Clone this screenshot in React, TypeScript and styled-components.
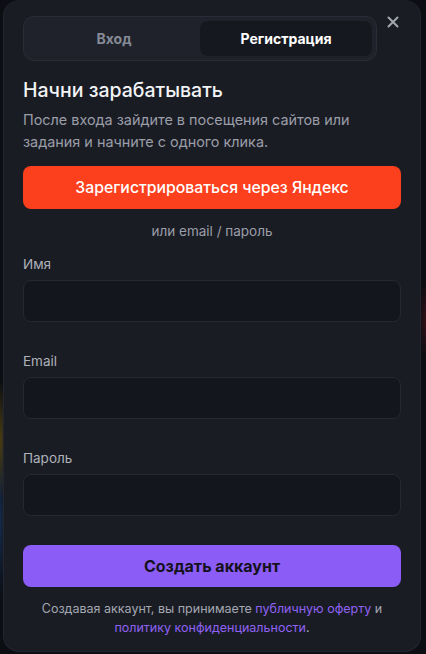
import React, { useState } from "react";
import styled, { createGlobalStyle } from "styled-components";

const Global = createGlobalStyle`
  html, body { margin: 0; padding: 0; }
  body {
    background:
      radial-gradient(ellipse 10px 60px at 0px 440px, rgba(150,120,20,0.45), transparent),
      radial-gradient(ellipse 10px 80px at 0px 520px, rgba(30,70,130,0.5), transparent),
      radial-gradient(ellipse 8px 40px at 426px 320px, rgba(120,20,30,0.35), transparent),
      #0c0e13;
    font-family: Inter, "Noto Sans", Arial, sans-serif;
    -webkit-font-smoothing: antialiased;
  }
  * { box-sizing: border-box; }
`;

const Page = styled.div`
  width: 426px;
  height: 654px;
  padding-left: 3px;
  display: flex;
  align-items: flex-start;
  overflow: hidden;
`;

const Panel = styled.div`
  position: relative;
  width: 418px;
  height: 652px;
  background: #1a1c24;
  border: 1px solid #23262f;
  border-top: none;
  border-radius: 16px;
  padding: 16px 19px 14px;
  display: flex;
  flex-direction: column;
`;

const CloseBtn = styled.button`
  position: absolute;
  top: 14px;
  right: 19px;
  width: 16px;
  height: 16px;
  padding: 0;
  border: none;
  background: transparent;
  display: flex;
  align-items: center;
  justify-content: center;
  cursor: pointer;
`;

const Tabs = styled.div`
  width: 354px;
  height: 46px;
  padding: 4px;
  border: 1px solid #2a2d37;
  border-radius: 11px;
  background: #1f222a;
  display: grid;
  grid-template-columns: 1fr 1fr;
`;

const Tab = styled.button<{ $active?: boolean }>`
  border: none;
  border-radius: 8px;
  background: ${(p) => (p.$active ? "#16181f" : "transparent")};
  color: ${(p) => (p.$active ? "#ffffff" : "#858a96")};
  font-family: inherit;
  font-size: 14px;
  font-weight: 700;
  cursor: pointer;
`;

const Title = styled.h2`
  margin: 15px 0 0;
  font-size: 19.5px;
  line-height: 28px;
  font-weight: 500;
  color: #f2f3f5;
`;

const Lead = styled.p`
  margin: 5px 0 0;
  font-size: 14.4px;
  line-height: 22px;
  color: #9a9ea8;
  padding-right: 40px;
`;

const Button = styled.button<{ $variant: "yandex" | "primary" }>`
  width: 100%;
  height: 43px;
  border: none;
  border-radius: 8px;
  font-family: inherit;
  cursor: pointer;
  background: ${(p) => (p.$variant === "yandex" ? "#fc3f1d" : "#8b5cf6")};
  color: ${(p) => (p.$variant === "yandex" ? "#ffffff" : "#14121c")};
  font-size: ${(p) => (p.$variant === "yandex" ? "15.8px" : "16px")};
  font-weight: ${(p) => (p.$variant === "yandex" ? 500 : 700)};
  margin-top: ${(p) => (p.$variant === "yandex" ? "13px" : "29px")};
`;

const Divider = styled.div`
  margin-top: 13px;
  text-align: center;
  font-size: 13.5px;
  line-height: 18px;
  color: #9a9ea8;
`;

const Fields = styled.div`
  margin-top: 15px;
  display: flex;
  flex-direction: column;
  gap: 30px;
`;

const Field = styled.label`
  display: flex;
  flex-direction: column;
  gap: 7px;
`;

const LabelText = styled.span`
  font-size: 13.5px;
  line-height: 18px;
  color: #aeb2ba;
`;

const Input = styled.input`
  height: 42px;
  width: 100%;
  border: 1px solid #252831;
  border-radius: 8px;
  background: #14161d;
  color: #fff;
  font-family: inherit;
  font-size: 14px;
  padding: 0 12px;
  outline: none;
`;

const Terms = styled.p`
  margin: 12px 0 0;
  text-align: center;
  font-size: 12.5px;
  line-height: 19px;
  color: #a4a8b1;
`;

const Link = styled.a`
  color: #8f62f4;
  text-decoration: none;
`;

export default function App() {
  const [tab, setTab] = useState<"login" | "register">("register");
  return (
    <>
      <Global />
      <Page>
        <Panel>
          <CloseBtn aria-label="Закрыть">
            <svg width="12" height="12" viewBox="0 0 12 12">
              <path d="M1.5 1.5L10.5 10.5M10.5 1.5L1.5 10.5" stroke="#a3a7b0" strokeWidth="2" strokeLinecap="round" />
            </svg>
          </CloseBtn>
          <Tabs>
            <Tab $active={tab === "login"} onClick={() => setTab("login")}>Вход</Tab>
            <Tab $active={tab === "register"} onClick={() => setTab("register")}>Регистрация</Tab>
          </Tabs>
          <Title>Начни зарабатывать</Title>
          <Lead>После входа зайдите в посещения сайтов или задания и начните с одного клика.</Lead>
          <Button $variant="yandex">Зарегистрироваться через Яндекс</Button>
          <Divider>или email / пароль</Divider>
          <Fields>
            <Field>
              <LabelText>Имя</LabelText>
              <Input type="text" />
            </Field>
            <Field>
              <LabelText>Email</LabelText>
              <Input type="email" />
            </Field>
            <Field>
              <LabelText>Пароль</LabelText>
              <Input type="password" />
            </Field>
          </Fields>
          <Button $variant="primary">Создать аккаунт</Button>
          <Terms>
            Создавая аккаунт, вы принимаете <Link href="#">публичную оферту</Link> и
            <br />
            <Link href="#">политику конфиденциальности</Link>.
          </Terms>
        </Panel>
      </Page>
    </>
  );
}
